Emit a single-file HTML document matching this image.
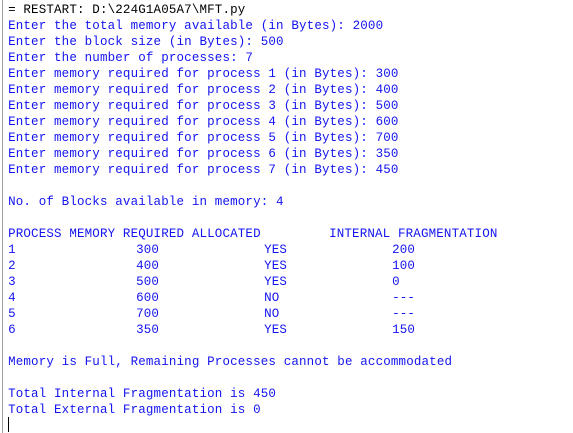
<!DOCTYPE html>
<html><head><style>
body{margin:0;width:573px;height:433px;background:#fff;overflow:hidden;position:relative;font-family:"Liberation Mono","DejaVu Sans Mono",monospace;font-size:12.5px;}
.l{position:absolute;white-space:pre;line-height:16px;height:16px;color:#1414f0;}
.l i{display:inline-block;width:7.67px;text-align:center;font-style:normal;}
.k{color:#000;}
#bd{position:absolute;left:2px;top:0;width:1px;height:433px;background:#a0a0a0;}
#cur{position:absolute;left:8px;top:417px;width:1px;height:15px;background:#000;}
</style></head><body>
<div id="bd"></div>
<div class="l k" style="left:8px;top:2px"><i>=</i><i> </i><i>R</i><i>E</i><i>S</i><i>T</i><i>A</i><i>R</i><i>T</i><i>:</i><i> </i><i>D</i><i>:</i><i>\</i><i>2</i><i>2</i><i>4</i><i>G</i><i>1</i><i>A</i><i>0</i><i>5</i><i>A</i><i>7</i><i>\</i><i>M</i><i>F</i><i>T</i><i>.</i><i>p</i><i>y</i></div>
<div class="l" style="left:8px;top:18px"><i>E</i><i>n</i><i>t</i><i>e</i><i>r</i><i> </i><i>t</i><i>h</i><i>e</i><i> </i><i>t</i><i>o</i><i>t</i><i>a</i><i>l</i><i> </i><i>m</i><i>e</i><i>m</i><i>o</i><i>r</i><i>y</i><i> </i><i>a</i><i>v</i><i>a</i><i>i</i><i>l</i><i>a</i><i>b</i><i>l</i><i>e</i><i> </i><i>(</i><i>i</i><i>n</i><i> </i><i>B</i><i>y</i><i>t</i><i>e</i><i>s</i><i>)</i><i>:</i><i> </i><i>2</i><i>0</i><i>0</i><i>0</i></div>
<div class="l" style="left:8px;top:34px"><i>E</i><i>n</i><i>t</i><i>e</i><i>r</i><i> </i><i>t</i><i>h</i><i>e</i><i> </i><i>b</i><i>l</i><i>o</i><i>c</i><i>k</i><i> </i><i>s</i><i>i</i><i>z</i><i>e</i><i> </i><i>(</i><i>i</i><i>n</i><i> </i><i>B</i><i>y</i><i>t</i><i>e</i><i>s</i><i>)</i><i>:</i><i> </i><i>5</i><i>0</i><i>0</i></div>
<div class="l" style="left:8px;top:50px"><i>E</i><i>n</i><i>t</i><i>e</i><i>r</i><i> </i><i>t</i><i>h</i><i>e</i><i> </i><i>n</i><i>u</i><i>m</i><i>b</i><i>e</i><i>r</i><i> </i><i>o</i><i>f</i><i> </i><i>p</i><i>r</i><i>o</i><i>c</i><i>e</i><i>s</i><i>s</i><i>e</i><i>s</i><i>:</i><i> </i><i>7</i></div>
<div class="l" style="left:8px;top:66px"><i>E</i><i>n</i><i>t</i><i>e</i><i>r</i><i> </i><i>m</i><i>e</i><i>m</i><i>o</i><i>r</i><i>y</i><i> </i><i>r</i><i>e</i><i>q</i><i>u</i><i>i</i><i>r</i><i>e</i><i>d</i><i> </i><i>f</i><i>o</i><i>r</i><i> </i><i>p</i><i>r</i><i>o</i><i>c</i><i>e</i><i>s</i><i>s</i><i> </i><i>1</i><i> </i><i>(</i><i>i</i><i>n</i><i> </i><i>B</i><i>y</i><i>t</i><i>e</i><i>s</i><i>)</i><i>:</i><i> </i><i>3</i><i>0</i><i>0</i></div>
<div class="l" style="left:8px;top:82px"><i>E</i><i>n</i><i>t</i><i>e</i><i>r</i><i> </i><i>m</i><i>e</i><i>m</i><i>o</i><i>r</i><i>y</i><i> </i><i>r</i><i>e</i><i>q</i><i>u</i><i>i</i><i>r</i><i>e</i><i>d</i><i> </i><i>f</i><i>o</i><i>r</i><i> </i><i>p</i><i>r</i><i>o</i><i>c</i><i>e</i><i>s</i><i>s</i><i> </i><i>2</i><i> </i><i>(</i><i>i</i><i>n</i><i> </i><i>B</i><i>y</i><i>t</i><i>e</i><i>s</i><i>)</i><i>:</i><i> </i><i>4</i><i>0</i><i>0</i></div>
<div class="l" style="left:8px;top:98px"><i>E</i><i>n</i><i>t</i><i>e</i><i>r</i><i> </i><i>m</i><i>e</i><i>m</i><i>o</i><i>r</i><i>y</i><i> </i><i>r</i><i>e</i><i>q</i><i>u</i><i>i</i><i>r</i><i>e</i><i>d</i><i> </i><i>f</i><i>o</i><i>r</i><i> </i><i>p</i><i>r</i><i>o</i><i>c</i><i>e</i><i>s</i><i>s</i><i> </i><i>3</i><i> </i><i>(</i><i>i</i><i>n</i><i> </i><i>B</i><i>y</i><i>t</i><i>e</i><i>s</i><i>)</i><i>:</i><i> </i><i>5</i><i>0</i><i>0</i></div>
<div class="l" style="left:8px;top:114px"><i>E</i><i>n</i><i>t</i><i>e</i><i>r</i><i> </i><i>m</i><i>e</i><i>m</i><i>o</i><i>r</i><i>y</i><i> </i><i>r</i><i>e</i><i>q</i><i>u</i><i>i</i><i>r</i><i>e</i><i>d</i><i> </i><i>f</i><i>o</i><i>r</i><i> </i><i>p</i><i>r</i><i>o</i><i>c</i><i>e</i><i>s</i><i>s</i><i> </i><i>4</i><i> </i><i>(</i><i>i</i><i>n</i><i> </i><i>B</i><i>y</i><i>t</i><i>e</i><i>s</i><i>)</i><i>:</i><i> </i><i>6</i><i>0</i><i>0</i></div>
<div class="l" style="left:8px;top:130px"><i>E</i><i>n</i><i>t</i><i>e</i><i>r</i><i> </i><i>m</i><i>e</i><i>m</i><i>o</i><i>r</i><i>y</i><i> </i><i>r</i><i>e</i><i>q</i><i>u</i><i>i</i><i>r</i><i>e</i><i>d</i><i> </i><i>f</i><i>o</i><i>r</i><i> </i><i>p</i><i>r</i><i>o</i><i>c</i><i>e</i><i>s</i><i>s</i><i> </i><i>5</i><i> </i><i>(</i><i>i</i><i>n</i><i> </i><i>B</i><i>y</i><i>t</i><i>e</i><i>s</i><i>)</i><i>:</i><i> </i><i>7</i><i>0</i><i>0</i></div>
<div class="l" style="left:8px;top:146px"><i>E</i><i>n</i><i>t</i><i>e</i><i>r</i><i> </i><i>m</i><i>e</i><i>m</i><i>o</i><i>r</i><i>y</i><i> </i><i>r</i><i>e</i><i>q</i><i>u</i><i>i</i><i>r</i><i>e</i><i>d</i><i> </i><i>f</i><i>o</i><i>r</i><i> </i><i>p</i><i>r</i><i>o</i><i>c</i><i>e</i><i>s</i><i>s</i><i> </i><i>6</i><i> </i><i>(</i><i>i</i><i>n</i><i> </i><i>B</i><i>y</i><i>t</i><i>e</i><i>s</i><i>)</i><i>:</i><i> </i><i>3</i><i>5</i><i>0</i></div>
<div class="l" style="left:8px;top:162px"><i>E</i><i>n</i><i>t</i><i>e</i><i>r</i><i> </i><i>m</i><i>e</i><i>m</i><i>o</i><i>r</i><i>y</i><i> </i><i>r</i><i>e</i><i>q</i><i>u</i><i>i</i><i>r</i><i>e</i><i>d</i><i> </i><i>f</i><i>o</i><i>r</i><i> </i><i>p</i><i>r</i><i>o</i><i>c</i><i>e</i><i>s</i><i>s</i><i> </i><i>7</i><i> </i><i>(</i><i>i</i><i>n</i><i> </i><i>B</i><i>y</i><i>t</i><i>e</i><i>s</i><i>)</i><i>:</i><i> </i><i>4</i><i>5</i><i>0</i></div>
<div class="l" style="left:8px;top:194px"><i>N</i><i>o</i><i>.</i><i> </i><i>o</i><i>f</i><i> </i><i>B</i><i>l</i><i>o</i><i>c</i><i>k</i><i>s</i><i> </i><i>a</i><i>v</i><i>a</i><i>i</i><i>l</i><i>a</i><i>b</i><i>l</i><i>e</i><i> </i><i>i</i><i>n</i><i> </i><i>m</i><i>e</i><i>m</i><i>o</i><i>r</i><i>y</i><i>:</i><i> </i><i>4</i></div>
<div class="l" style="left:8px;top:226px"><i>P</i><i>R</i><i>O</i><i>C</i><i>E</i><i>S</i><i>S</i><i> </i><i>M</i><i>E</i><i>M</i><i>O</i><i>R</i><i>Y</i><i> </i><i>R</i><i>E</i><i>Q</i><i>U</i><i>I</i><i>R</i><i>E</i><i>D</i><i> </i><i>A</i><i>L</i><i>L</i><i>O</i><i>C</i><i>A</i><i>T</i><i>E</i><i>D</i></div>
<div class="l" style="left:329px;top:226px"><i>I</i><i>N</i><i>T</i><i>E</i><i>R</i><i>N</i><i>A</i><i>L</i><i> </i><i>F</i><i>R</i><i>A</i><i>G</i><i>M</i><i>E</i><i>N</i><i>T</i><i>A</i><i>T</i><i>I</i><i>O</i><i>N</i></div>
<div class="l" style="left:8px;top:242px"><i>1</i></div><div class="l" style="left:136px;top:242px"><i>3</i><i>0</i><i>0</i></div><div class="l" style="left:264px;top:242px"><i>Y</i><i>E</i><i>S</i></div><div class="l" style="left:392px;top:242px"><i>2</i><i>0</i><i>0</i></div>
<div class="l" style="left:8px;top:258px"><i>2</i></div><div class="l" style="left:136px;top:258px"><i>4</i><i>0</i><i>0</i></div><div class="l" style="left:264px;top:258px"><i>Y</i><i>E</i><i>S</i></div><div class="l" style="left:392px;top:258px"><i>1</i><i>0</i><i>0</i></div>
<div class="l" style="left:8px;top:274px"><i>3</i></div><div class="l" style="left:136px;top:274px"><i>5</i><i>0</i><i>0</i></div><div class="l" style="left:264px;top:274px"><i>Y</i><i>E</i><i>S</i></div><div class="l" style="left:392px;top:274px"><i>0</i></div>
<div class="l" style="left:8px;top:290px"><i>4</i></div><div class="l" style="left:136px;top:290px"><i>6</i><i>0</i><i>0</i></div><div class="l" style="left:264px;top:290px"><i>N</i><i>O</i></div><div class="l" style="left:392px;top:290px"><i>-</i><i>-</i><i>-</i></div>
<div class="l" style="left:8px;top:306px"><i>5</i></div><div class="l" style="left:136px;top:306px"><i>7</i><i>0</i><i>0</i></div><div class="l" style="left:264px;top:306px"><i>N</i><i>O</i></div><div class="l" style="left:392px;top:306px"><i>-</i><i>-</i><i>-</i></div>
<div class="l" style="left:8px;top:322px"><i>6</i></div><div class="l" style="left:136px;top:322px"><i>3</i><i>5</i><i>0</i></div><div class="l" style="left:264px;top:322px"><i>Y</i><i>E</i><i>S</i></div><div class="l" style="left:392px;top:322px"><i>1</i><i>5</i><i>0</i></div>
<div class="l" style="left:8px;top:354px"><i>M</i><i>e</i><i>m</i><i>o</i><i>r</i><i>y</i><i> </i><i>i</i><i>s</i><i> </i><i>F</i><i>u</i><i>l</i><i>l</i><i>,</i><i> </i><i>R</i><i>e</i><i>m</i><i>a</i><i>i</i><i>n</i><i>i</i><i>n</i><i>g</i><i> </i><i>P</i><i>r</i><i>o</i><i>c</i><i>e</i><i>s</i><i>s</i><i>e</i><i>s</i><i> </i><i>c</i><i>a</i><i>n</i><i>n</i><i>o</i><i>t</i><i> </i><i>b</i><i>e</i><i> </i><i>a</i><i>c</i><i>c</i><i>o</i><i>m</i><i>m</i><i>o</i><i>d</i><i>a</i><i>t</i><i>e</i><i>d</i></div>
<div class="l" style="left:8px;top:386px"><i>T</i><i>o</i><i>t</i><i>a</i><i>l</i><i> </i><i>I</i><i>n</i><i>t</i><i>e</i><i>r</i><i>n</i><i>a</i><i>l</i><i> </i><i>F</i><i>r</i><i>a</i><i>g</i><i>m</i><i>e</i><i>n</i><i>t</i><i>a</i><i>t</i><i>i</i><i>o</i><i>n</i><i> </i><i>i</i><i>s</i><i> </i><i>4</i><i>5</i><i>0</i></div>
<div class="l" style="left:8px;top:402px"><i>T</i><i>o</i><i>t</i><i>a</i><i>l</i><i> </i><i>E</i><i>x</i><i>t</i><i>e</i><i>r</i><i>n</i><i>a</i><i>l</i><i> </i><i>F</i><i>r</i><i>a</i><i>g</i><i>m</i><i>e</i><i>n</i><i>t</i><i>a</i><i>t</i><i>i</i><i>o</i><i>n</i><i> </i><i>i</i><i>s</i><i> </i><i>0</i></div>
<div id="cur"></div>
</body></html>
